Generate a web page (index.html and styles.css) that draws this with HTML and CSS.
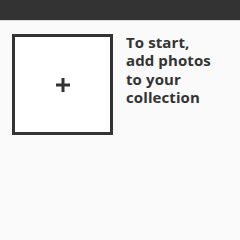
FILE: index.html
```html
<!DOCTYPE html>
<html>
<head>
<meta charset="utf-8">
<link rel="stylesheet" href="styles.css">
</head>
<body>
<header class="topbar"></header>
<main class="content">
  <button class="add-tile" aria-label="Add photo">
    <svg class="plus" width="16" height="16" viewBox="0 0 16 16"><path d="M8 1v14M1 8h14" stroke="#333" stroke-width="3"/></svg>
  </button>
  <p class="hint">To start,<br>add photos<br>to your<br>collection</p>
</main>
</body>
</html>
```
FILE: styles.css
```css
html, body { margin: 0; padding: 0; }
body {
  background: #fafafa;
  font-family: "Open Sans", sans-serif;
  color: #333;
  width: 240px;
  height: 240px;
  overflow: hidden;
}
.topbar {
  height: 20px;
  background: #333;
  border-bottom: 1px solid #ddd;
}
.content {
  display: flex;
  align-items: flex-start;
  padding: 13px 12px 0 12px;
  gap: 13px;
}
.add-tile {
  box-sizing: border-box;
  width: 101px;
  height: 101px;
  border: 3px solid #333;
  background: #fff;
  padding: 0;
  display: flex;
  align-items: center;
  justify-content: center;
  flex-shrink: 0;
}
.hint {
  margin: -1px 0 0 0;
  font-size: 15px;
  font-weight: 700;
  line-height: 18.3px;
  letter-spacing: 0.1px;
}
```
